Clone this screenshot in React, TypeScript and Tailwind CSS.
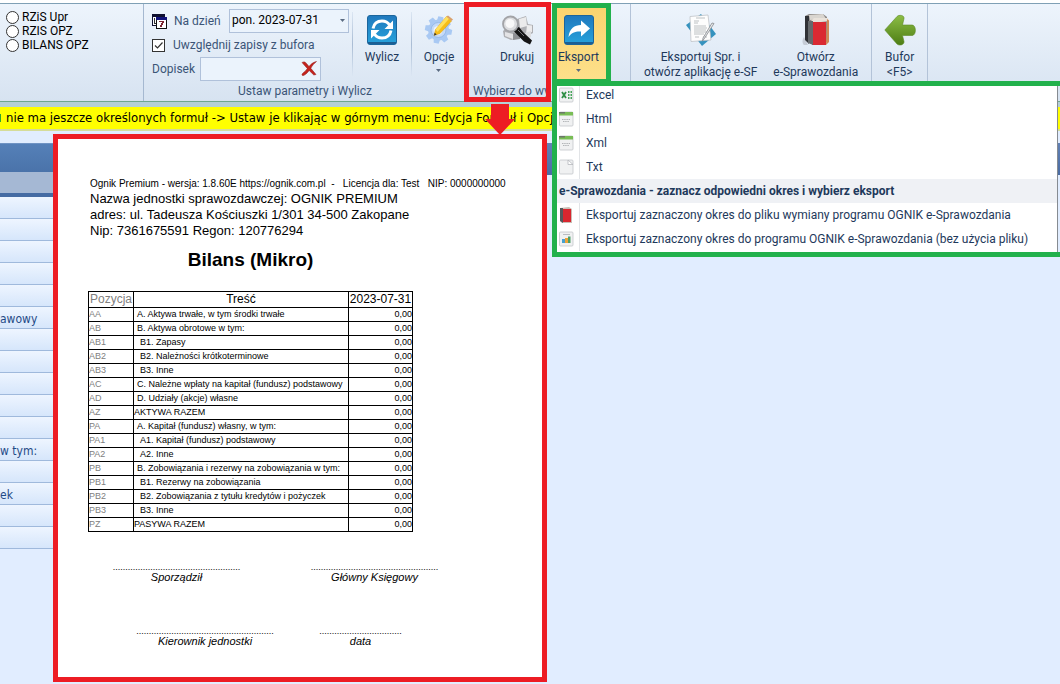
import { useState } from "react";
import type { ReactNode } from "react";

const profiles = ["RZiS Upr", "RZIS OPZ", "BILANS OPZ"];

const gridRows = ["", "", "", "", "", "awowy", "", "", "", "", "", "w tym:", "", "ek", "", ""];

const gearTeeth = [0, 45, 90, 135];

const balanceRows = [
  { code: "AA", label: "A. Aktywa trwałe, w tym środki trwałe", level: 1 },
  { code: "AB", label: "B. Aktywa obrotowe w tym:", level: 1 },
  { code: "AB1", label: "B1. Zapasy", level: 2 },
  { code: "AB2", label: "B2. Należności krótkoterminowe", level: 2 },
  { code: "AB3", label: "B3. Inne", level: 2 },
  { code: "AC", label: "C. Należne wpłaty na kapitał (fundusz) podstawowy", level: 1 },
  { code: "AD", label: "D. Udziały (akcje) własne", level: 1 },
  { code: "AZ", label: "AKTYWA RAZEM", level: 0 },
  { code: "PA", label: "A. Kapitał (fundusz) własny, w tym:", level: 1 },
  { code: "PA1", label: "A1. Kapitał (fundusz) podstawowy", level: 2 },
  { code: "PA2", label: "A2. Inne", level: 2 },
  { code: "PB", label: "B. Zobowiązania i rezerwy na zobowiązania w tym:", level: 1 },
  { code: "PB1", label: "B1. Rezerwy na zobowiązania", level: 2 },
  { code: "PB2", label: "B2. Zobowiązania z tytułu kredytów i pożyczek", level: 2 },
  { code: "PB3", label: "B3. Inne", level: 2 },
  { code: "PZ", label: "PASYWA RAZEM", level: 0 },
];

const indent = ["pl-0", "pl-[3px]", "pl-[6px]"];

function CalendarIcon() {
  return (
    <svg viewBox="0 0 15 15" className="h-[15px] w-[15px]" shapeRendering="crispEdges">
      <rect x="0" y="0" width="13" height="12" fill="#101030" />
      <rect x="1" y="3" width="10" height="8" fill="#fff" />
      <path d="M2 4h1v6H2zM3 9h1v1H3z" fill="#333" />
      <rect x="4" y="3" width="11" height="12" fill="#111" />
      <rect x="4" y="3" width="11" height="3" fill="#12127a" />
      <rect x="5" y="6" width="9" height="8" fill="#fff" />
      <path d="M7 7h5v2h-1v2h-1v2H8v-2h1V9h1V8H7z" fill="#7c2430" />
    </svg>
  );
}

function ClearIcon() {
  return (
    <svg viewBox="0 0 16 15" className="h-[15px] w-4">
      <path
        d="M1 1.5C3 .3 4.500 1 5.500 2.500L8 5.500C10 3 12 1.300 15.500.5 13 2.500 11.300 4.500 9.800 7.300L15 13.500 12.800 14 8.200 9.500C6.500 11.500 5 13.500 2.500 14.500 1 15 .5 13.500 1.500 12.500 3.500 11 5 9.500 6.300 7.500Z"
        fill="#c4231d"
        stroke="#8f1512"
        strokeWidth=".5"
      />
    </svg>
  );
}

function BlueTile({ children }: { children: ReactNode }) {
  return (
    <svg viewBox="0 0 30 30" className="h-[30px] w-[30px]">
      <defs>
        <linearGradient id="tile" x1="0" y1="0" x2="0" y2="1">
          <stop offset="0" stopColor="#1f78bd" />
          <stop offset="1" stopColor="#27a3dc" />
        </linearGradient>
      </defs>
      <rect x=".5" y=".5" width="29" height="29" rx="2.500" fill="url(#tile)" stroke="#1b659c" />
      <path d="M1 28h28" stroke="#1c5f93" strokeWidth="2" />
      {children}
    </svg>
  );
}

function RefreshIcon() {
  return (
    <BlueTile>
      <g fill="none" stroke="#fff" strokeWidth="3">
        <path d="M6 13.500C7 8.500 10.500 6 15 6c3.500 0 6 1.500 7.500 4" />
        <path d="M24 15.500C23 20.500 19.500 23 15 23c-3.500 0-6-1.500-7.500-4" />
      </g>
      <path d="M26 5.500v8.500h-8.500zM4 23.500V15h8.500z" fill="#fff" />
    </BlueTile>
  );
}

function ShareIcon() {
  return (
    <BlueTile>
      <path d="M4.500 22C5.500 13.500 10.500 10 17 10V5.500l9 8-9 8V16.500C11.500 16.200 7.500 17.500 4.500 22Z" fill="#fff" />
    </BlueTile>
  );
}

function GearPencilIcon() {
  return (
    <svg viewBox="0 0 30 30" className="h-[30px] w-[30px]">
      <g fill="#a9c9f3">
        {gearTeeth.map((angle) => (
          <path key={angle} d="M12 1.500h5l1 6v15l-1 6h-5l-1-6v-15z" transform={`rotate(${angle + 10} 14.500 15)`} />
        ))}
        <circle cx="14.500" cy="15" r="10.500" />
      </g>
      <circle cx="14.500" cy="15" r="7.500" fill="#c4daf8" stroke="#8fb4e4" strokeWidth=".8" />
      <circle cx="14" cy="15.500" r="4.500" fill="#eef4fd" />
      <path d="m22.500 1.500 5 4.500L16 18.500l-6 2 1.500-6z" fill="#f6bd18" stroke="#d39a1c" strokeWidth=".5" />
      <path d="m22.500 1.500 2.500 2.200-11.300 13-2.200-2.200z" fill="#ffe05c" />
      <path d="m10 20.500.7-2.700 2 1.800z" fill="#333" />
      <path d="m22.500 1.500 1.500-1 5 4-1.500 1.500z" fill="#d9a06b" />
    </svg>
  );
}

function PreviewIcon() {
  return (
    <svg viewBox="0 0 32 30" className="h-[30px] w-8">
      <path d="m16 4 9-3 2 8 5 1v8l-8 4-14 3-7-3-1-6z" fill="#aeafb3" />
      <path d="m18 4 7-2 1 9-7 2zM26 10l5 .5V17l-6 2z" fill="#ebebec" />
      <path d="m4 17 8 2v5l-8-3z" fill="#e3e3e5" />
      <path d="m12 18 7 1v5l-7 1z" fill="#8f9094" />
      <path d="m21 19 9-3v6l-6 3z" fill="#dcdddf" />
      <path d="m15 13 3-1 4 5 9 8.500-2 4-6-3-5-5-5-5z" fill="#151516" />
      <path d="m17 15 6 6" stroke="#77787c" />
      <circle cx="9.500" cy="9" r="7.500" fill="#dcdde0" stroke="#a2a3a7" strokeWidth="1.800" />
      <circle cx="9" cy="8.500" r="4.500" fill="#f8f8f9" />
    </svg>
  );
}

function ReportIcon() {
  return (
    <svg viewBox="0 0 30 32" className="h-8 w-[30px]">
      <path d="m15 0 15 20-14 12L0 11z" fill="#3592be" />
      <path d="M4 2.500 22 1l3 25-20 1.500z" fill="#fdfdfd" stroke="#b9bcc0" strokeWidth=".7" />
      <path d="M10 4h9M8 7h5M8 9h4M8 12h12M8 14h13M8 16h12M8 18h13M8 20h10M9 23h4M17 23h4" stroke="#a2a6ab" strokeWidth=".7" />
      <path d="M28 9.500 18 25l-1.500 2 .5-3L26 9z" fill="#e8eaec" stroke="#85898e" strokeWidth=".8" />
    </svg>
  );
}

function BooksIcon() {
  return (
    <svg viewBox="0 0 30 32" className="h-8 w-[30px]">
      <path d="M3 31c-2-1-2-6 0-8l4 8z" fill="#c6ccd6" />
      <path d="M4 2 8 0h14l4 3v25H6z" fill="#8d8a88" />
      <path d="M4 2h4v28l-4-4z" fill="#303236" />
      <path d="m8 1 14-1 3 5-16 1z" fill="#d9d5cf" />
      <path d="m10 7 3-3h14l1 3-16 2z" fill="#e9e2da" />
      <path d="m26 5 2 1.500V28L25 31z" fill="#cf8a56" />
      <path d="M11 8h14v23H11z" fill="#da2932" />
      <path d="M7 7h5v24l-5-2z" fill="#66696c" />
    </svg>
  );
}

function BackIcon() {
  return (
    <svg viewBox="0 0 32 32" className="h-8 w-8">
      <defs>
        <linearGradient id="leaf" x1="0" y1="0" x2="0" y2="1">
          <stop offset="0" stopColor="#8cbd46" />
          <stop offset="1" stopColor="#4d7d14" />
        </linearGradient>
      </defs>
      <path
        d="M.8 16 13 2.500C15 .5 20.500 1 20 4.500L18.500 11H28c4.500 0 4.500 10.500 0 10.500h-9.500l1.500 6c.5 3.500-5 4.500-7 2.500z"
        fill="url(#leaf)"
        stroke="#5d8a26"
        strokeWidth=".6"
      />
    </svg>
  );
}

function FileIcon({ kind }: { kind: string }) {
  if (kind === "book") {
    return (
      <svg viewBox="0 0 15 16" className="h-4 w-[15px]">
        <path d="m1 1 9-1 3 2v14H3l-2-2z" fill="#c9bdb5" />
        <path d="M1 1h3v15l-3-2z" fill="#55585c" />
        <path d="M4 2h8v13H4z" fill="#d9262f" />
      </svg>
    );
  }
  return (
    <svg viewBox="0 0 15 16" className="h-4 w-[15px]">
      <rect x=".5" y="1" width="13.500" height="14" rx="1" fill="#f0f1f2" stroke="#c3c6ca" strokeWidth=".8" />
      {kind === "excel" && (
        <>
          <path d="m3 5 4 6M7 5l-4 6" stroke="#2f8f45" strokeWidth="1.800" />
          <path d="M9 5h1.500M11.500 5H13M9 8h1.500M11.500 8H13M9 11h1.500M11.500 11H13" stroke="#4aa55d" strokeWidth="1.800" />
        </>
      )}
      {kind === "web" && (
        <>
          <path d="M0 1h14v3.500H0z" fill="#79bd55" />
          <path d="M0 1h6v1.500H0z" fill="#6b7768" />
          <path d="M3 8.500h8M4 10.500h6" stroke="#b3b5b8" strokeDasharray="1.500 .7" />
        </>
      )}
      {kind === "text" && <path d="M9 1v4.500h5z" fill="#fff" stroke="#b5b8bc" strokeWidth=".8" />}
      {kind === "chart" && (
        <>
          <path d="M4 3.500h7" stroke="#b9bdc2" />
          <path d="M3 8h3v4H3z" fill="#47a1cf" />
          <path d="M6 7h3v5H6z" fill="#eca33b" />
          <path d="M9 5.500h2.500V12H9z" fill="#4e9f68" />
        </>
      )}
    </svg>
  );
}

function Caret() {
  return (
    <svg viewBox="0 0 5 3" className="h-[3px] w-[5px]">
      <path d="M0 0h5L2.500 3z" fill="#5a6b82" />
    </svg>
  );
}

function RibbonButton({ icon, lines, menu }: { icon: ReactNode; lines: string[]; menu?: boolean }) {
  return (
    <button type="button" className="flex flex-col items-center text-center leading-[15px] whitespace-nowrap text-[#1e395b]">
      <span className="mb-1 flex h-8 items-center">{icon}</span>
      {lines.map((line) => (
        <span key={line}>{line}</span>
      ))}
      {menu ? (
        <span className="mt-1">
          <Caret />
        </span>
      ) : null}
    </button>
  );
}

function Divider() {
  return <div className="mt-2 h-16 w-px bg-gradient-to-b from-[#dbe6f3] via-[#a9bcd4] to-[#dbe6f3]" />;
}

function ExportMenu() {
  const formats = [
    { label: "Excel", kind: "excel" },
    { label: "Html", kind: "web" },
    { label: "Xml", kind: "web" },
    { label: "Txt", kind: "text" },
  ];
  const reports = [
    { label: "Eksportuj zaznaczony okres do pliku wymiany programu OGNIK e-Sprawozdania", kind: "book" },
    { label: "Eksportuj zaznaczony okres do programu OGNIK e-Sprawozdania (bez użycia pliku)", kind: "chart" },
  ];

  const renderItem = (item: { label: string; kind: string }) => (
    <button key={item.label} type="button" className="flex h-6 w-full items-center text-left whitespace-nowrap">
      <span className="flex h-full w-[23px] items-center border-r border-[#e2e4e7] pl-0.5">
        <FileIcon kind={item.kind} />
      </span>
      <span className="pl-1.5">{item.label}</span>
    </button>
  );

  return (
    <div className="absolute top-[81px] right-0 left-[552px]">
      <div className="mr-[2px] border-r border-[#868b91] bg-white pt-0.5 pb-1.5 pl-[5px] text-[#1e395b]">
        {formats.map(renderItem)}
        <p className="h-6 bg-[#eff1f5] pl-0.5 leading-6 font-bold whitespace-nowrap">
          e-Sprawozdania - zaznacz odpowiedni okres i wybierz eksport
        </p>
        {reports.map(renderItem)}
      </div>
      <div className="pointer-events-none absolute inset-0 border-y-[5px] border-l-[5px] border-[#22b14c]" />
    </div>
  );
}

function Signature({ dots, label, className }: { dots: number; label: string; className: string }) {
  return (
    <div className={`text-center ${className}`}>
      <p className="text-[9px] leading-[10px]">{".".repeat(dots)}</p>
      <p className="text-[11px] leading-[11px] italic">{label}</p>
    </div>
  );
}

function Preview() {
  return (
    <section className="mt-[3px] h-[548px] w-[494px] shrink-0 border-[5px] border-[#ed1c24] bg-white pt-[38px] pl-[30px] font-['Liberation_Sans',sans-serif] text-black">
      <div className="pl-0.5">
        <p className="text-[10px] leading-[14px] whitespace-pre">
          {"Ognik Premium - wersja: 1.8.60E https://ognik.com.pl  -   Licencja dla: Test   NIP: 0000000000"}
        </p>
        <div className="text-[13px] leading-4">
          <p>Nazwa jednostki sprawozdawczej: OGNIK PREMIUM</p>
          <p>adres: ul. Tadeusza Kościuszki 1/301 34-500 Zakopane</p>
          <p>Nip: 7361675591 Regon: 120776294</p>
        </div>
      </div>
      <h1 className="mt-[7px] w-[325px] text-center text-[19px] leading-7 font-bold">Bilans (Mikro)</h1>
      <table className="mt-[17px] w-[325px] table-fixed border-collapse text-[9px] leading-[13px]">
        <colgroup>
          <col className="w-[45px]" />
          <col className="w-[215px]" />
          <col className="w-16" />
        </colgroup>
        <thead>
          <tr className="h-4 text-xs leading-[15px]">
            <th className="border border-black p-0 font-normal text-[#808080]">Pozycja</th>
            <th className="border border-black p-0 font-normal">Treść</th>
            <th className="border border-black p-0 font-normal">2023-07-31</th>
          </tr>
        </thead>
        <tbody>
          {balanceRows.map((row) => (
            <tr key={row.code} className="h-3.5">
              <td className="border border-black p-0 text-[#808080]">{row.code}</td>
              <td className="border border-black p-0 whitespace-nowrap">
                <span className={indent[row.level]}>{row.label}</span>
              </td>
              <td className="border border-black p-0 text-right">0,00</td>
            </tr>
          ))}
        </tbody>
      </table>
      <div className="mt-[30px] flex gap-[69px] pl-6">
        <Signature dots={51} label="Sporządził" className="w-[129px]" />
        <Signature dots={51} label="Główny Księgowy" className="w-[129px]" />
      </div>
      <div className="mt-[43px] flex gap-[45px] pl-12">
        <Signature dots={55} label="Kierownik jednostki" className="w-[138px]" />
        <Signature dots={33} label="data" className="w-[83px]" />
      </div>
    </section>
  );
}

export default function App() {
  const [profile, setProfile] = useState("");
  const [useBuffer, setUseBuffer] = useState(true);
  const [note, setNote] = useState("");

  return (
    <div className="relative min-h-screen overflow-hidden bg-[#e1edff] font-['Roboto','Open_Sans',sans-serif] text-xs">
      <header className="border-t-[3px] border-white">
        <div className="flex h-[99px] border-y border-t-[#7fa0b5] border-b-[#6fa78f] bg-gradient-to-b from-[#edf4fc] to-[#d7e3f1]">
          <div className="flex w-[144px] shrink-0 flex-col border-r border-[#a5b8d0] pt-1.5 pl-1.5 text-black">
            {profiles.map((name) => (
              <label key={name} className="flex h-3.5 items-center gap-[3px] leading-[14px]">
                <input
                  type="radio"
                  name="profile"
                  checked={profile === name}
                  onChange={() => setProfile(name)}
                  className="h-[13px] w-[13px] appearance-none rounded-full border border-[#333] bg-white checked:border-4"
                />
                {name}
              </label>
            ))}
          </div>

          <div className="flex w-[322px] shrink-0 flex-col text-[#3b5577]">
            <div className="flex h-[79px]">
              <div className="w-[208px] pt-[5px] pl-2">
                <div className="flex h-6 items-center">
                  <CalendarIcon />
                  <label htmlFor="day" className="w-[62px] pl-[7px]">
                    Na dzień
                  </label>
                  <div className="relative">
                    <select
                      id="day"
                      className="block h-6 w-[120px] appearance-none border border-[#b0c1da] bg-[#ebf3fc] px-0.5 pb-0.5 text-xs text-black"
                    >
                      <option>pon. 2023-07-31</option>
                    </select>
                    <span className="pointer-events-none absolute top-2.5 right-1">
                      <Caret />
                    </span>
                  </div>
                </div>
                <label className="flex h-6 items-center gap-2">
                  <span className="relative">
                    <input
                      type="checkbox"
                      checked={useBuffer}
                      onChange={(event) => setUseBuffer(event.target.checked)}
                      className="block h-[13px] w-[13px] appearance-none border border-[#333] bg-white"
                    />
                    {useBuffer ? (
                      <svg viewBox="0 0 13 13" className="pointer-events-none absolute inset-0 h-[13px] w-[13px]">
                        <path d="m3 6.500 2.500 2.500 5-5.500" fill="none" stroke="#333" strokeWidth="1.200" />
                      </svg>
                    ) : null}
                  </span>
                  Uwzględnij zapisy z bufora
                </label>
                <div className="flex h-6 items-center">
                  <label htmlFor="note" className="w-12">
                    Dopisek
                  </label>
                  <div className="relative">
                    <input
                      id="note"
                      type="text"
                      value={note}
                      onChange={(event) => setNote(event.target.value)}
                      className="block h-6 w-[121px] border border-[#b0c1da] bg-[#ebf3fc] pl-1 text-black outline-none"
                    />
                    <button
                      type="button"
                      aria-label="Wyczyść"
                      onClick={() => setNote("")}
                      className="absolute top-1 right-1"
                    >
                      <ClearIcon />
                    </button>
                  </div>
                </div>
              </div>
              <Divider />
              <div className="flex w-[58px] justify-center pt-2.5">
                <RibbonButton icon={<RefreshIcon />} lines={["Wylicz"]} />
              </div>
              <Divider />
              <div className="flex flex-1 justify-center pt-2.5">
                <RibbonButton icon={<GearPencilIcon />} lines={["Opcje"]} menu />
              </div>
            </div>
            <p className="text-center leading-4">Ustaw parametry i Wylicz</p>
          </div>

          <div className="relative w-[86px] shrink-0 text-[#3b5577]">
            <div className="flex h-[79px] justify-center pt-2.5 pl-4">
              <RibbonButton icon={<PreviewIcon />} lines={["Drukuj"]} />
            </div>
            <p className="pl-[7px] leading-4 whitespace-nowrap">Wybierz do wy</p>
            <div className="pointer-events-none absolute -top-0.5 right-px -bottom-px -left-0.5 border-[5px] border-[#ed1c24]" />
          </div>

          <div className="-mt-px h-[81px] w-[59px] shrink-0 border-[5px] border-[#22b14c] bg-gradient-to-b from-[#fbd46f] to-[#fde08a]">
            <div className="flex justify-center pt-1.5 pr-1.5">
              <RibbonButton icon={<ShareIcon />} lines={["Eksport"]} menu />
            </div>
          </div>

          <div className="flex">
            <div className="w-[19px]" />
            <div className="h-20 w-px bg-[#b3c3d8]" />
            <div className="flex gap-4 px-[13px] pt-2.5">
              <RibbonButton icon={<ReportIcon />} lines={["Eksportuj Spr. i", "otwórz aplikację e-SF"]} />
              <RibbonButton icon={<BooksIcon />} lines={["Otwórz", "e-Sprawozdania"]} />
            </div>
            <div className="h-20 w-px bg-[#b3c3d8]" />
            <div className="flex w-[55px] justify-center pt-2.5">
              <RibbonButton icon={<BackIcon />} lines={["Bufor", "<F5>"]} />
            </div>
            <div className="h-20 w-px bg-[#b3c3d8]" />
          </div>
        </div>
      </header>

      <div className="border-t-[5px] border-b-2 border-t-[#b4d0d6] border-b-[#d5dc9a] bg-[#ffff00]">
        <p className="flex h-[22px] items-center gap-[5px] overflow-hidden font-['DejaVu_Sans_Condensed','DejaVu_Sans',sans-serif] text-[13px] whitespace-nowrap text-black">
          <span className="h-2 w-px bg-[#2fa52f]" />
          nie ma jeszcze określonych formuł -&gt; Ustaw je klikając w górnym menu: Edycja Formuł i Opcje
        </p>
      </div>

      <main className="flex items-start">
        <div className="w-[53px] shrink-0 overflow-hidden pt-3 font-['DejaVu_Sans_Condensed','DejaVu_Sans',sans-serif] text-xs text-[#1f4a86]">
          <div className="h-[29px] border-t border-[#6f93c4] bg-gradient-to-b from-[#5580b8] to-[#4a73aa]" />
          <div className="h-[21px] bg-[#a5b8d4]" />
          <div className="h-1 bg-[#456ba3]" />
          {gridRows.map((text, i) => (
            <div
              key={i}
              className="h-[22px] border-b border-[#9fb9dc] bg-gradient-to-b from-[#eef5ff] to-[#d6e6fb] leading-6 whitespace-nowrap"
            >
              {text}
            </div>
          ))}
        </div>
        <Preview />
        <div className="flex-1 pt-3">
          <div className="h-8 bg-gradient-to-b from-[#6181b5] to-[#4a6ca3]" />
        </div>
      </main>

      <svg viewBox="0 0 30 31" className="absolute top-[104px] left-[485px] h-[31px] w-[30px]">
        <path d="M6 0h18v15h6L15 31 0 15h6z" fill="#ed1c24" />
      </svg>

      <ExportMenu />
    </div>
  );
}
